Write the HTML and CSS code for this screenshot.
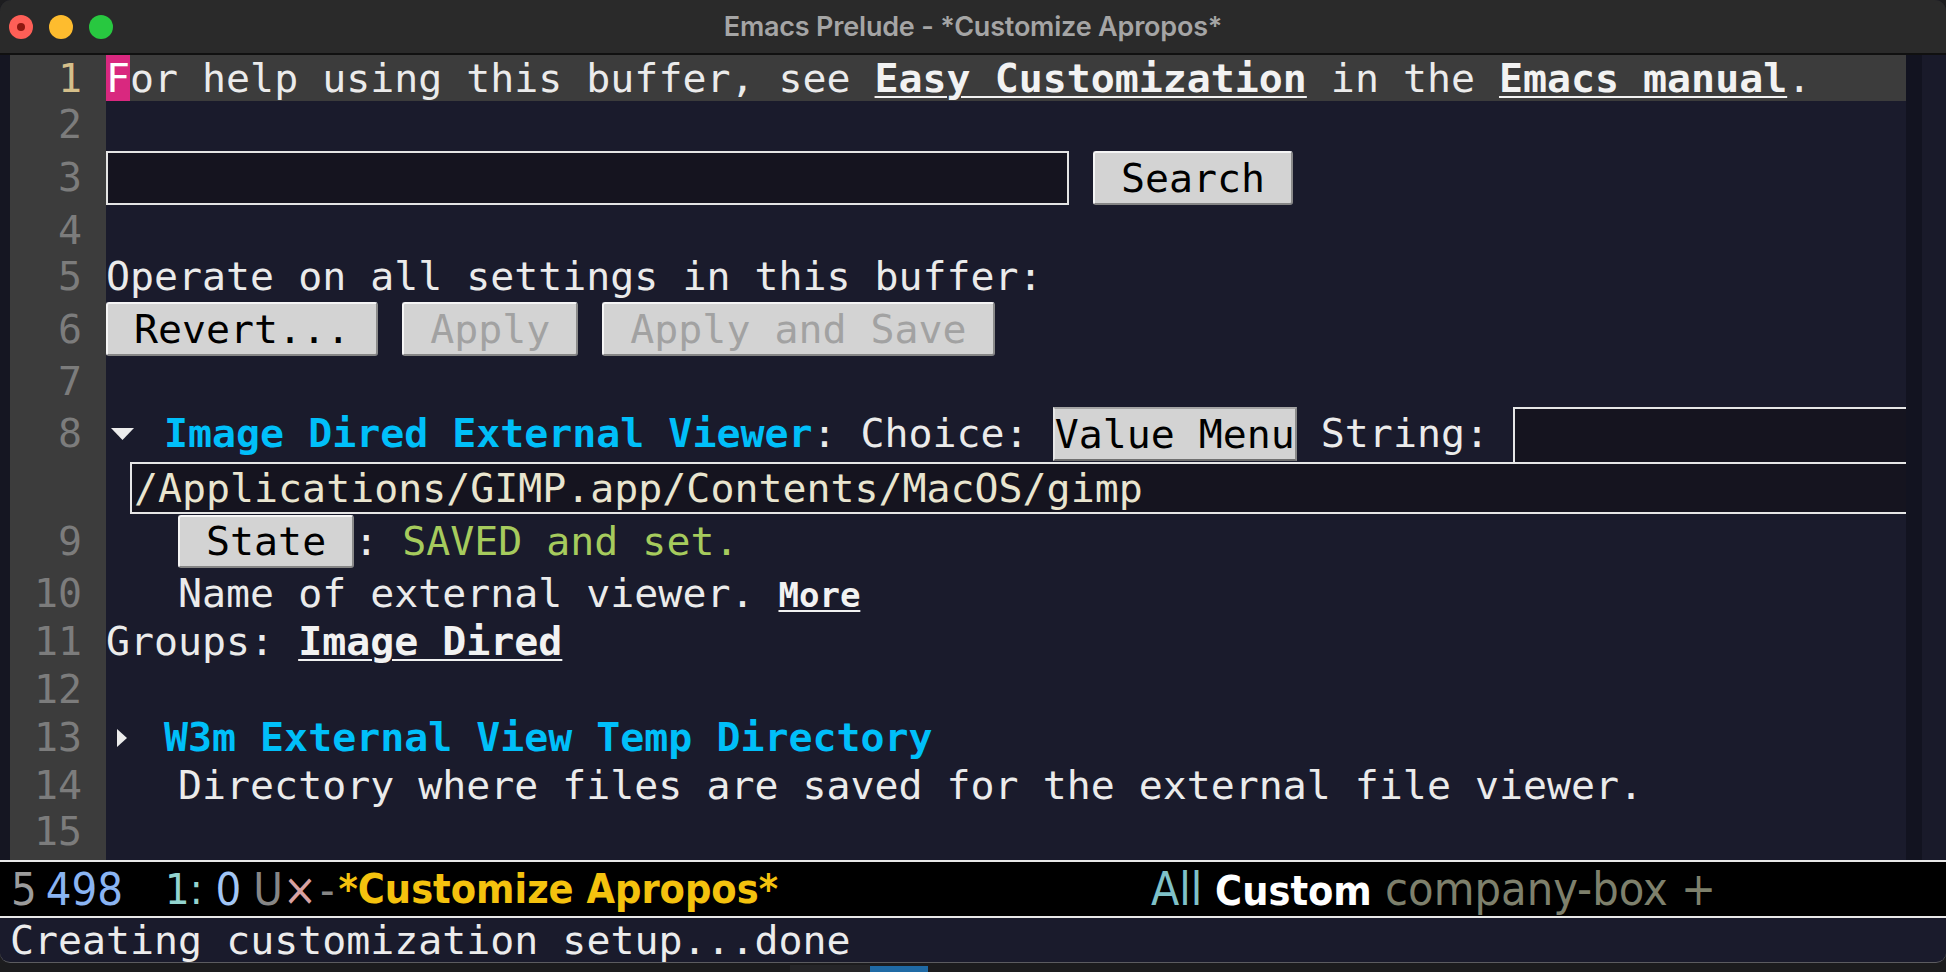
FILE: index.html
```html
<!DOCTYPE html>
<html>
<head>
<meta charset="utf-8">
<title>Emacs Prelude - *Customize Apropos*</title>
<link rel="stylesheet" href="styles.css">
</head>
<body>
<div class="window">
  <div class="titlebar">
    <div class="lights"><span class="light tl-red"><span class="dot"></span></span><span class="light tl-yellow"></span><span class="light tl-green"></span></div>
    <div class="title">Emacs Prelude - *Customize Apropos*</div>
    <div class="spacer"></div>
  </div>
  <div class="editor">
    <div class="fringe-l"></div>
    <div class="buffer">
      <div class="ln r46 cur"><span class="num">1</span><span class="txt hl"><span class="cursor">F</span>or help using this buffer, see <span class="link">Easy Customization</span> in the <span class="link">Emacs manual</span>.</span></div>
      <div class="ln r47"><span class="num">2</span><span class="txt"></span></div>
      <div class="ln r59"><span class="num">3</span><span class="txt row"><span class="field"></span><span class="sp"> </span><span class="btn">Search</span></span></div>
      <div class="ln r46"><span class="num">4</span><span class="txt"></span></div>
      <div class="ln r47"><span class="num">5</span><span class="txt">Operate on all settings in this buffer:</span></div>
      <div class="ln r58"><span class="num">6</span><span class="txt row"><span class="btn">Revert...</span><span class="sp"> </span><span class="btn dis">Apply</span><span class="sp"> </span><span class="btn dis">Apply and Save</span></span></div>
      <div class="ln r47"><span class="num">7</span><span class="txt"></span></div>
      <div class="ln r57"><span class="num">8</span><span class="txt row"><svg class="tri" width="34" height="14" viewBox="0 0 34 14"><polygon points="5,1 28,1 16.5,13" fill="#ececec"/></svg><span class="sp"> </span><span class="key">Image Dired External Viewer</span><span>: Choice: </span><span class="btn vm">Value Menu</span><span> String: </span><span class="strbox"></span></span></div>
      <div class="ln r52"><span class="num"></span><span class="txt row"><span class="wrapbox">/Applications/GIMP.app/Contents/MacOS/gimp</span></span></div>
      <div class="ln r55"><span class="num">9</span><span class="txt row"><span>   </span><span class="btn state">State</span><span>: </span><span class="saved">SAVED and set.</span></span></div>
      <div class="ln r48"><span class="num">10</span><span class="txt">   Name of external viewer. <span class="more">More</span></span></div>
      <div class="ln r48"><span class="num">11</span><span class="txt">Groups: <span class="link">Image Dired</span></span></div>
      <div class="ln r48"><span class="num">12</span><span class="txt"></span></div>
      <div class="ln r49"><span class="num">13</span><span class="txt row"><svg class="tri" width="34" height="18" viewBox="0 0 34 18"><polygon points="11,0 21,9 11,18" fill="#ececec"/></svg><span class="sp"> </span><span class="key">W3m External View Temp Directory</span></span></div>
      <div class="ln r46"><span class="num">14</span><span class="txt">   Directory where files are saved for the external file viewer.</span></div>
      <div class="ln r52 last"><span class="num">15</span><span class="txt"></span></div>
    </div>
    <div class="fringe-r"></div>
  </div>
  <div class="modeline">
    <span class="m-grey">5</span><span class="m-blue m498">498</span><span class="m-teal m1">1:</span><span class="m-lblue"> 0</span><span class="m-dim mu">U</span><span class="m-pink">×</span><span class="m-dim mdash">-</span><span class="m-gold">*Customize Apropos*</span>
    <span class="m-right"><span class="m-all">All</span><span class="m-custom"> Custom</span><span class="m-olive"> company-box +</span></span>
  </div>
  <div class="echo">Creating customization setup...done</div>
</div>
<div class="desktop"><span class="dock-dark"></span><span class="dock-blue"></span></div>
</body>
</html>
```
FILE: styles.css
```css
* { box-sizing: border-box; }
html, body { margin: 0; padding: 0; }
body {
  width: 1946px;
  height: 972px;
  overflow: hidden;
  background: #1d1d1f;
  font-family: "DejaVu Sans Mono", monospace;
}
.window {
  height: 963px;
  display: flex;
  flex-direction: column;
  background: #1a1b2c;
  border-radius: 11px 11px 10px 10px;
  overflow: hidden;
  border-bottom: 1px solid #5c5c60;
}
.titlebar {
  height: 55px;
  flex: none;
  display: grid;
  grid-template-columns: 1fr auto 1fr;
  align-items: center;
  background: #2a2a2a;
  border-bottom: 2px solid #101010;
}
.lights {
  display: flex;
  align-items: center;
  gap: 16px;
  padding-left: 9px;
  padding-top: 1px;
}
.light {
  width: 24px;
  height: 24px;
  border-radius: 50%;
  display: flex;
  align-items: center;
  justify-content: center;
}
.tl-red { background: #fe5f57; }
.tl-red .dot { width: 8px; height: 8px; border-radius: 50%; background: #8d1810; }
.tl-yellow { background: #febc2e; }
.tl-green { background: #28c840; }
.title {
  font-family: Inter, "Liberation Sans", sans-serif;
  font-weight: 600;
  font-size: 27px;
  color: #a5a5a5;
  letter-spacing: -0.2px;
}
.editor {
  height: 805px;
  flex: none;
  display: flex;
}
.fringe-l { width: 10px; flex: none; background: #151622; }
.fringe-r { width: 40px; flex: none; background: linear-gradient(to right, #121320 0, #121320 16px, #191a2a 16px); }
.buffer {
  flex: 1;
  display: flex;
  flex-direction: column;
  font-size: 39.9px;
  color: #ebebeb;
}
.ln { display: flex; flex: none; }
.r46 { height: 46px; line-height: 46px; }
.r47 { height: 47px; line-height: 47px; }
.r48 { height: 48px; line-height: 48px; }
.r49 { height: 49px; line-height: 49px; }
.r52 { height: 52px; line-height: 52px; }
.r55 { height: 55px; line-height: 55px; }
.r57 { height: 57px; line-height: 57px; }
.r58 { height: 58px; line-height: 58px; }
.r59 { height: 59px; line-height: 59px; }
.last { line-height: 46px; }
.num {
  width: 96px;
  flex: none;
  background: #3c3c3c;
  color: #7c7c7c;
  text-align: right;
  padding-right: 24px;
}
.cur .num { color: #d5bf8a; }
.txt {
  flex: 1;
  white-space: pre;
  overflow: hidden;
}
.txt.row { display: flex; align-items: center; }
.hl { background: #3c3c3c; }
.cursor { background: #d9287f; color: #ffffff; }
.link {
  font-weight: bold;
  color: #f2f2f2;
  text-decoration: underline;
  text-decoration-thickness: 2px;
  text-underline-offset: 4px;
}
.sp { flex: none; }
.field {
  width: 963px;
  height: 54px;
  flex: none;
  border: 2px solid #e4e4e4;
  background: #15141f;
}
.btn {
  flex: none;
  height: 54px;
  line-height: 50px;
  padding: 0 26px;
  background: #d3d3d3;
  color: #000;
  border: 2px solid;
  border-color: #f5f5f5 #8a8a8a #858585 #f5f5f5;
  border-radius: 3px;
}
.btn.dis { color: #a2a2a2; }
.btn.vm {
  padding: 0;
  border-radius: 0;
  border-color: #a5a5a5 #8a8a8a #707070 #e6e6e6;
}
.btn.state { height: 53px; line-height: 49px; }
.key { color: #00bff9; font-weight: bold; }
.tri { flex: none; display: block; }
.strbox {
  flex: 1;
  align-self: stretch;
  margin-top: 2px;
  border-top: 2px solid #e6e6e6;
  border-left: 2px solid #e6e6e6;
  background: #15141f;
}
.wrapbox {
  flex: 1;
  align-self: stretch;
  margin-left: 24px;
  border: 2px solid #e6e6e6;
  border-right: none;
  background: #15141f;
  color: #e9e5cf;
  padding-left: 2px;
  line-height: 48px;
}
.saved { color: #a6cb5d; }
.more {
  font-size: 34px;
  font-weight: bold;
  color: #f2f2f2;
  text-decoration: underline;
  text-decoration-thickness: 2px;
  text-underline-offset: 3px;
}
.modeline {
  height: 58px;
  flex: none;
  display: flex;
  align-items: center;
  background: #000;
  border-top: 2px solid #e8e8e8;
  border-bottom: 2px solid #e8e8e8;
  font-family: "DejaVu Sans Condensed", "DejaVu Sans", sans-serif;
  font-size: 45px;
  white-space: pre;
  padding-left: 11px;
}
.m-grey { color: #9c9c9c; }
.m-blue { color: #8ab4f2; }
.m498 { margin-left: 9px; }
.m-teal { color: #93d4cf; }
.m1 { margin-left: 42px; font-size: 43px; }
.m-lblue { color: #a2c6f6; }
.m-dim { color: #868686; }
.mu { margin-left: 12px; }
.m-pink { color: #d8a2a2; }
.mdash { margin: 0 4px 0 3px; }
.m-gold { color: #f4c20e; font-weight: bold; font-size: 41px; }
.m-right { margin-left: auto; margin-right: 230px; }
.m-all { color: #7fc1c8; font-size: 46px; }
.m-custom { color: #ffffff; font-weight: bold; font-size: 41px; }
.m-olive { color: #7e806c; font-size: 46.5px; }
.echo {
  height: 45px;
  flex: none;
  line-height: 45px;
  padding-left: 10px;
  font-size: 39.9px;
  color: #ececec;
  white-space: pre;
}
.desktop {
  height: 9px;
  display: flex;
  align-items: flex-end;
  background: #1c1c1e;
}
.dock-dark { margin-left: 790px; width: 80px; height: 7px; background: #252528; }
.dock-blue { width: 58px; height: 6px; background: #1f6aa5; }
```
